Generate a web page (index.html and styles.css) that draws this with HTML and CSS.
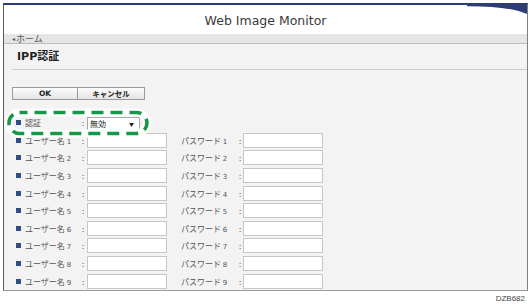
FILE: index.html
```html
<!DOCTYPE html>
<html>

<head>
    <meta charset="utf-8">
    <title>IPP認証 - Web Image Monitor</title>
    <meta name="viewport" content="width=device-width, initial-scale=1">
    <link rel="stylesheet" href="styles.css">
</head>

<body>
    <div class="window">
        <div class="header">
            <span class="app-title">Web Image Monitor</span>
            <svg class="swoosh" width="60" height="10" viewBox="0 0 60 10">
                <path d="M0 0 L60 0 L60 9 Q42 1 0 1.2 Z" fill="#2c3c74"/>
            </svg>
        </div>
        <div class="breadcrumb"><span class="arrow">◂</span>ホーム</div>
        <div class="main">
            <div class="page-title">IPP認証</div>
            <div class="buttons">
                <button class="btn btn-ok">OK</button>
                <button class="btn btn-cancel">キャンセル</button>
            </div>
            <div class="form">
                <svg class="callout" width="156" height="40" viewBox="0 0 156 40">
                    <rect x="5" y="8.5" width="138" height="21" rx="10.5" fill="none" stroke="#fff" stroke-width="8"/>
                    <rect x="5" y="8.5" width="138" height="21" rx="10.5" fill="none" stroke="#16974a" stroke-width="3.6" stroke-dasharray="12 7" stroke-dashoffset="4"/>
                </svg>
                <div class="row">
                    <span class="bullet"></span>
                    <span class="label">認証</span>
                    <span class="colon">:</span>
                    <div class="select"><span>無効</span><span class="caret">▼</span></div>
                </div>
                <div class="row">
                    <span class="bullet"></span>
                    <span class="label">ユーザー名 <small>1</small></span>
                    <span class="colon">:</span>
                    <span class="input"></span>
                    <span class="label2">パスワード <small>1</small></span>
                    <span class="colon2">:</span>
                    <span class="input"></span>
                </div>
                <div class="row">
                    <span class="bullet"></span>
                    <span class="label">ユーザー名 <small>2</small></span>
                    <span class="colon">:</span>
                    <span class="input"></span>
                    <span class="label2">パスワード <small>2</small></span>
                    <span class="colon2">:</span>
                    <span class="input"></span>
                </div>
                <div class="row">
                    <span class="bullet"></span>
                    <span class="label">ユーザー名 <small>3</small></span>
                    <span class="colon">:</span>
                    <span class="input"></span>
                    <span class="label2">パスワード <small>3</small></span>
                    <span class="colon2">:</span>
                    <span class="input"></span>
                </div>
                <div class="row">
                    <span class="bullet"></span>
                    <span class="label">ユーザー名 <small>4</small></span>
                    <span class="colon">:</span>
                    <span class="input"></span>
                    <span class="label2">パスワード <small>4</small></span>
                    <span class="colon2">:</span>
                    <span class="input"></span>
                </div>
                <div class="row">
                    <span class="bullet"></span>
                    <span class="label">ユーザー名 <small>5</small></span>
                    <span class="colon">:</span>
                    <span class="input"></span>
                    <span class="label2">パスワード <small>5</small></span>
                    <span class="colon2">:</span>
                    <span class="input"></span>
                </div>
                <div class="row">
                    <span class="bullet"></span>
                    <span class="label">ユーザー名 <small>6</small></span>
                    <span class="colon">:</span>
                    <span class="input"></span>
                    <span class="label2">パスワード <small>6</small></span>
                    <span class="colon2">:</span>
                    <span class="input"></span>
                </div>
                <div class="row">
                    <span class="bullet"></span>
                    <span class="label">ユーザー名 <small>7</small></span>
                    <span class="colon">:</span>
                    <span class="input"></span>
                    <span class="label2">パスワード <small>7</small></span>
                    <span class="colon2">:</span>
                    <span class="input"></span>
                </div>
                <div class="row">
                    <span class="bullet"></span>
                    <span class="label">ユーザー名 <small>8</small></span>
                    <span class="colon">:</span>
                    <span class="input"></span>
                    <span class="label2">パスワード <small>8</small></span>
                    <span class="colon2">:</span>
                    <span class="input"></span>
                </div>
                <div class="row">
                    <span class="bullet"></span>
                    <span class="label">ユーザー名 <small>9</small></span>
                    <span class="colon">:</span>
                    <span class="input"></span>
                    <span class="label2">パスワード <small>9</small></span>
                    <span class="colon2">:</span>
                    <span class="input"></span>
                </div>
            </div>
        </div>
    </div>
    <div class="figure-id">DZB682</div>
</body>

</html>
```

FILE: styles.css
```css
body {
    margin: 0;
    padding: 3px 2px 0 3px;
    background-color: white;
    font-family: "DejaVu Sans", "Noto Sans CJK JP", sans-serif;
    color: #555;
}

.window {
    border-top: 2px solid #2c3c74;
    border-left: 1px solid #5a5a5a;
    border-right: 1px solid #808080;
    border-bottom: 1px solid #9a9a9a;
    background-color: #f3f3f3;
}

.header {
    position: relative;
    height: 29px;
    line-height: 29px;
    text-align: center;
    background-color: white;
}

.app-title {
    font-size: 12.5px;
    color: #3a3a3a;
}

.swoosh {
    position: absolute;
    top: 0;
    right: 0;
}

.breadcrumb {
    height: 9px;
    line-height: 9px;
    padding-left: 8px;
    font-size: 9px;
    font-family: "Noto Sans CJK JP", sans-serif;
    color: #555;
    background-color: #e4e5e7;
    border-bottom: 1px solid #bcbcbc;
}

.breadcrumb .arrow {
    font-size: 6px;
    margin-right: 1px;
    vertical-align: 1px;
}

.main {
    position: relative;
}

.page-title {
    height: 25px;
    line-height: 25px;
    margin-left: 8px;
    padding-left: 5px;
    font-size: 11px;
    font-weight: bold;
    color: #222;
    font-family: "DejaVu Sans", "Noto Sans CJK JP", sans-serif;
    border-bottom: 1px solid #cdcdcd;
}

.buttons {
    display: flex;
    margin: 17px 0 0 8px;
}

.btn {
    height: 13px;
    padding: 0;
    margin: 0;
    font-family: "DejaVu Sans", "Noto Sans CJK JP", sans-serif;
    font-size: 7.5px;
    font-weight: bold;
    color: #222;
    border: 1px solid #9a9a9a;
    background: linear-gradient(#fdfdfd, #e4e4e4);
}

.btn-ok {
    width: 66px;
}

.btn-cancel {
    width: 67px;
    border-left: none;
}

.form {
    position: relative;
    margin-top: 14px;
    padding-left: 12px;
}

.callout {
    position: absolute;
    left: 0;
    top: -10px;
    z-index: 2;
}

.row {
    display: flex;
    align-items: center;
    height: 17.6px;
    font-size: 8px;
    font-family: "Noto Sans CJK JP", sans-serif;
    color: #555;
}

.row small {
    font-size: 7px;
    font-family: "DejaVu Sans", sans-serif;
}

.bullet {
    width: 5px;
    height: 5px;
    margin-right: 4px;
    background-color: #2f4e85;
}

.label {
    width: 57px;
}

.colon {
    width: 5px;
}

.label2 {
    width: 58px;
    margin-left: 14px;
}

.colon2 {
    width: 4px;
}

.input {
    width: 80px;
    height: 15px;
    box-sizing: border-box;
    border: 1px solid #c6c6c6;
    background-color: white;
}

.select {
    display: flex;
    justify-content: space-between;
    align-items: center;
    width: 53px;
    height: 14px;
    margin-top: 2px;
    box-sizing: border-box;
    padding: 0 5px 0 2px;
    border: 1px solid #a9a9a9;
    background-color: white;
    color: #222;
}

.select .caret {
    font-size: 5px;
}

.figure-id {
    margin-top: 3px;
    padding-right: 3px;
    text-align: right;
    font-family: "Liberation Sans", sans-serif;
    font-size: 8px;
    color: #444;
}
```
